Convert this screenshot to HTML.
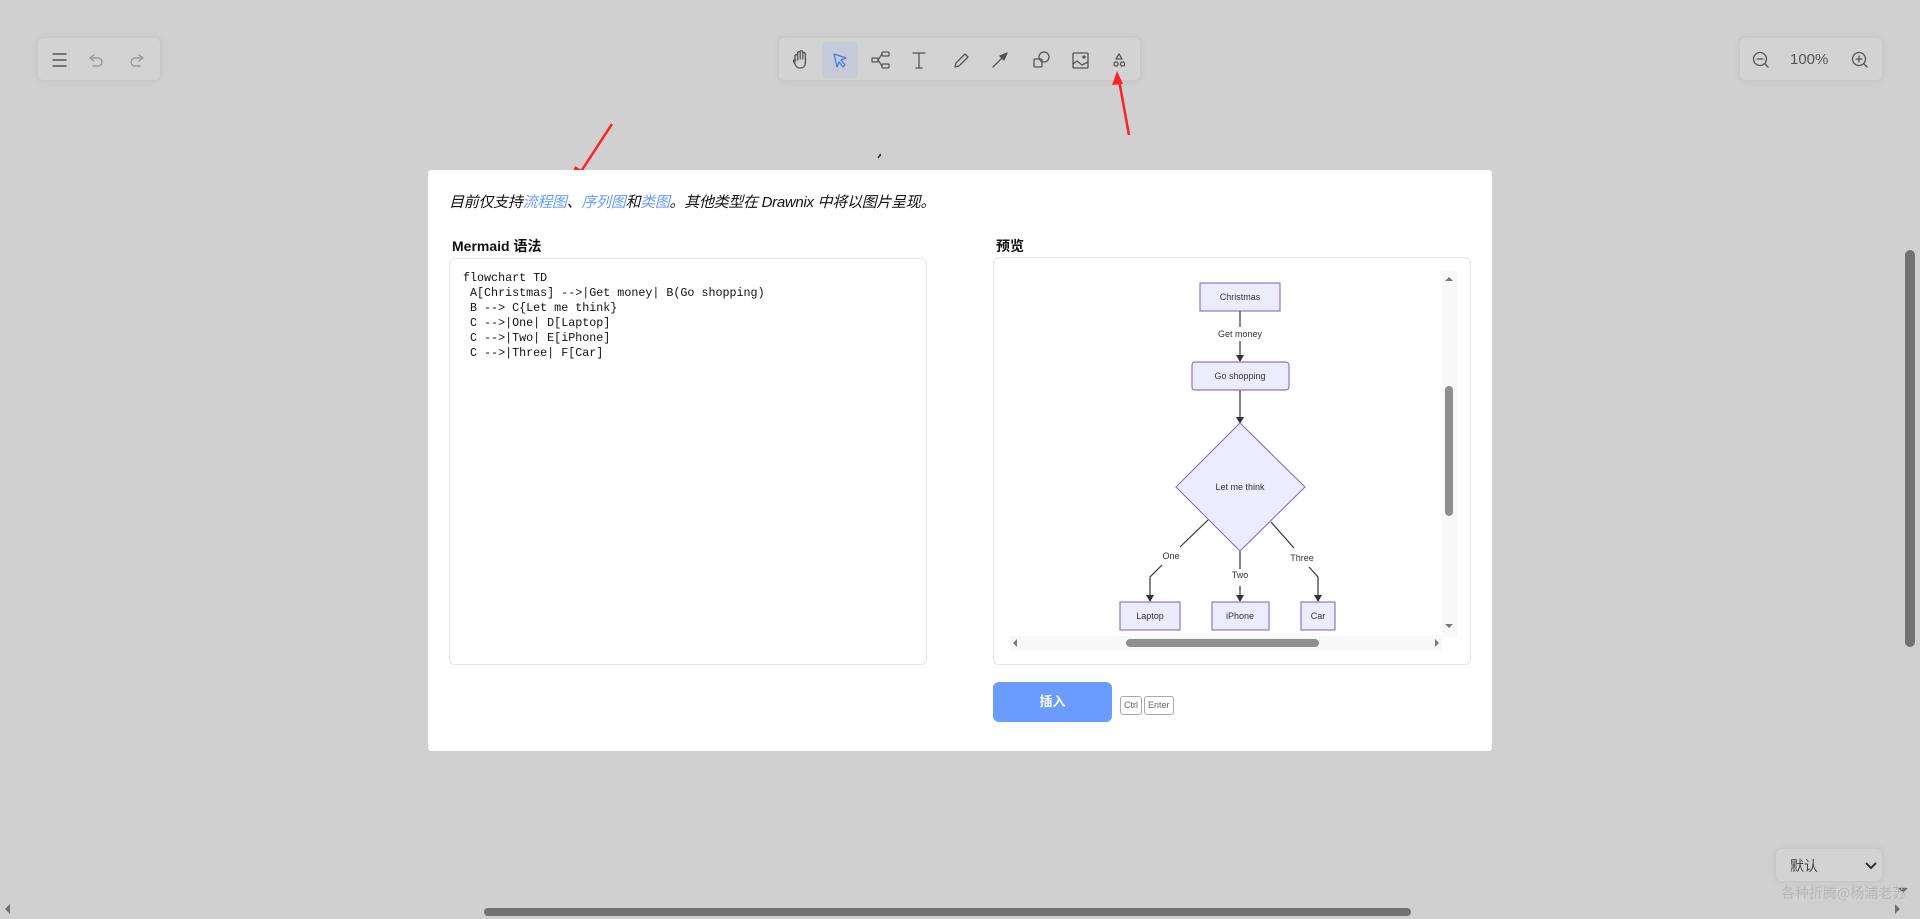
<!DOCTYPE html>
<html><head><meta charset="utf-8"><style>
*{box-sizing:border-box;margin:0;padding:0}
body{width:1920px;height:919px;background:#d0d0d0;position:relative;overflow:hidden;font-family:"Liberation Sans","Noto Sans CJK SC",sans-serif}
.bar{position:absolute;background:#d3d3d3;border:1px solid #c8c8c8;border-radius:6px;box-shadow:0 0 8px rgba(0,0,0,.06)}
#modal{position:absolute;left:428px;top:170px;width:1064px;height:581px;background:#fff;border-radius:3px}
.box{position:absolute;border:1px solid #e3e3e3;border-radius:6px;background:#fff}
pre{font-family:"Liberation Mono","Noto Sans CJK SC",monospace;font-size:11.7px;line-height:15.1px;color:#111}
.ti{position:absolute;top:10px;width:24px;height:24px}
</style></head><body>
<div class="bar" style="left:37px;top:37px;width:124px;height:44px">
<svg width="124" height="44" style="position:absolute;left:0;top:0" fill="none" stroke-linecap="round">
<g stroke="#555" stroke-width="1.4"><path d="M15 16h13M15 22h13M15 28h13"/></g>
<g stroke="#999" stroke-width="1.4"><path d="M56 17l-4 3 4 3M52 20h8a4 4 0 0 1 0 8h-5"/><path d="M101 17l4 3-4 3M105 20h-8a4 4 0 0 0 0 8h5"/></g>
</svg></div>
<div class="bar" style="left:778px;top:37px;width:363px;height:44px">
<div style="position:absolute;left:43px;top:4px;width:36px;height:36px;background:#c6cad6;border-radius:6px"></div>
<svg width="363" height="44" style="position:absolute;left:0;top:0" fill="none" stroke="#555" stroke-width="1.3" stroke-linejoin="round" stroke-linecap="round">
<g transform="translate(22 22)"><path d="M-6 2v-6a1.3 1.3 0 0 1 2.6 0v4v-7a1.3 1.3 0 0 1 2.6 0v6v-7a1.3 1.3 0 0 1 2.6 0v7v-5a1.3 1.3 0 0 1 2.6 0v8c0 4-2 6-5 6h-1c-2 0-3-1-4-3l-2-4a1.2 1.2 0 0 1 2-1z"/></g>
<g transform="translate(61 22)"><path d="M-6 -6l12 4-5 2 4 5-2 2-4-5-2 5z" stroke="#4a7be0"/></g>
<g transform="translate(101 22)"><rect x="-8" y="-2" width="6" height="4" rx="1"/><rect x="2" y="-8" width="7" height="4" rx="1"/><rect x="2" y="4" width="7" height="4" rx="1"/><path d="M-2 0l4-6M-2 0l4 6"/></g>
<g transform="translate(140 22)"><path d="M-6 -7h12M0 -7v15M-3 8h6"/></g>
<g transform="translate(182 22)"><path d="M-6 7l1-4 9-9 3 3-9 9z"/></g>
<g transform="translate(221 22)"><path d="M-7 7l12-12"/><path d="M7 -7l-3 7-4-4z" fill="#555"/></g>
<g transform="translate(262 22)"><rect x="-7" y="-1" width="8" height="8" rx="1"/><circle cx="3" cy="-3" r="5"/></g>
<g transform="translate(301 22)"><rect x="-7" y="-7" width="15" height="15" rx="1"/><path d="M-7 4l4-3 5 4 6-3"/><circle cx="4" cy="-3" r="1" fill="#555"/></g>
<g transform="translate(340 22)"><path d="M0 -6l3 5h-6z"/><rect x="-5" y="2" width="4" height="4" rx="1.5"/><rect x="1.5" y="2" width="4" height="4" rx="1.5"/></g>
</svg></div>
<div class="bar" style="left:1739px;top:37px;width:144px;height:44px">
<svg width="144" height="44" style="position:absolute;left:0;top:0" fill="none" stroke="#555" stroke-width="1.3" stroke-linecap="round">
<circle cx="20" cy="21" r="6.5"/><path d="M25 26l3 3M17 21h6"/>
<circle cx="119" cy="21" r="6.5"/><path d="M124 26l3 3M116 21h6M119 18v6"/></svg>
<div style="position:absolute;left:50px;top:13px;font-size:15px;color:#555">100%</div></div>
<svg width="1920" height="919" style="position:absolute;left:0;top:0">
<path d="M878 158c2-3 3-5 2-2" stroke="#333" stroke-width="1.5" fill="none"/>
<path d="M612 124L578 176" stroke="#f22" stroke-width="2.5"/><path d="M570 180l5-14 8 5z" fill="#f22"/>
<path d="M1129 135L1119 80" stroke="#f22" stroke-width="2.5"/><path d="M1117 71l-5 14 11-1z" fill="#f22"/>
</svg>
<div style="position:absolute;left:1905px;top:250px;width:10px;height:397px;background:#727272;border-radius:5px"></div>
<div style="position:absolute;left:484px;top:908px;width:927px;height:8px;background:#727272;border-radius:4px"></div>
<div style="position:absolute;left:1898px;top:888px;width:0;height:0;border:5px solid transparent;border-top-color:#707070"></div>
<div style="position:absolute;left:1895px;top:904px;width:0;height:0;border:5px solid transparent;border-left-color:#707070"></div>
<div style="position:absolute;left:0;top:904px;width:0;height:0;border:5px solid transparent;border-right-color:#707070"></div>
<div class="bar" style="left:1775px;top:848px;width:108px;height:34px;border-radius:7px">
<div style="position:absolute;left:14px;top:7px;font-size:14px;color:#444">默认</div>
<svg width="12" height="8" style="position:absolute;left:89px;top:13px"><path d="M1 1l5 5 5-5" stroke="#333" stroke-width="2" fill="none"/></svg></div>
<div style="position:absolute;left:1781px;top:883px;font-size:14px;color:#b8b8b8;font-family:'Noto Sans CJK SC',sans-serif">各种折腾@杨浦老苏</div>
<div id="modal">
<div style="position:absolute;left:21px;top:21px;font-size:15px;font-style:italic;color:#111;letter-spacing:-.3px">目前仅支持<span style="color:#6a9bff">流程图</span>、<span style="color:#6a9bff">序列图</span>和<span style="color:#6a9bff">类图</span>。其他类型在 Drawnix 中将以图片呈现。</div>
<div style="position:absolute;left:24px;top:66px;font-size:14px;font-weight:bold;color:#111">Mermaid 语法</div>
<div style="position:absolute;left:568px;top:66px;font-size:14px;font-weight:bold;color:#111">预览</div>
<div class="box" style="left:21px;top:88px;width:478px;height:407px">
<pre style="position:absolute;left:13px;top:12px">flowchart TD
 A[Christmas] -->|Get money| B(Go shopping)
 B --> C{Let me think}
 C -->|One| D[Laptop]
 C -->|Two| E[iPhone]
 C -->|Three| F[Car]</pre></div>
<div class="box" style="left:565px;top:87px;width:478px;height:408px">
<svg width="478" height="408" style="position:absolute;left:-1px;top:-1px" font-family="Liberation Sans,sans-serif" font-size="9" fill="#333" text-anchor="middle">
<rect x="449" y="14" width="15" height="366" fill="#f8f8f8"/><rect x="16" y="379" width="433" height="15" fill="#f8f8f8"/>
<rect x="452" y="129" width="8" height="130" rx="4" fill="#8f8f8f"/>
<rect x="133" y="382" width="193" height="8" rx="4" fill="#8f8f8f"/>
<path d="M452 24l4-4 4 4z M452 367l4 4 4-4z M20 386l4-4v8z M442 382l4 4-4 4z" fill="#777"/>
<g stroke="#333" stroke-width="1.2" fill="none">
<path d="M247 54v16M247 84v15M247 133v28M215 263l-28 27M169 308l-12 12v20M247 294v18M247 329v11M278 265l23 26M316 310l9 10v20"/>
</g>
<g fill="#333"><path d="M243 98h8l-4 7z M243 160h8l-4 7z M153 338h8l-4 7z M243 338h8l-4 7z M321 338h8l-4 7z"/></g>
<g fill="#ececff" stroke="#9370db" stroke-width="1.2">
<rect x="207" y="26" width="80" height="28"/><rect x="199" y="105" width="97" height="28" rx="3"/>
<path d="M247 166L312 230L247 294L183 230z"/>
<rect x="127" y="345" width="60" height="28"/><rect x="219" y="345" width="57" height="28"/><rect x="308" y="345" width="34" height="28"/></g>
<g><text x="247" y="43">Christmas</text><text x="247" y="80">Get money</text><text x="247" y="122">Go shopping</text><text x="247" y="233">Let me think</text>
<text x="178" y="302">One</text><text x="247" y="321">Two</text><text x="309" y="304">Three</text>
<text x="157" y="362">Laptop</text><text x="247" y="362">iPhone</text><text x="325" y="362">Car</text></g>
</svg></div>
<div style="position:absolute;left:565px;top:512px;width:119px;height:40px;background:#6a9bff;border-radius:6px;color:#fff;font-size:13px;font-weight:bold;text-align:center;line-height:40px">插入</div>
<div style="position:absolute;left:692px;top:526px;height:19px;padding:0 3px;border:1px solid #aaa;border-radius:3px;font-size:9px;color:#666;line-height:17px">Ctrl</div>
<div style="position:absolute;left:716px;top:526px;height:19px;padding:0 3px;border:1px solid #aaa;border-radius:3px;font-size:9px;color:#666;line-height:17px">Enter</div>
</div>
</body></html>
